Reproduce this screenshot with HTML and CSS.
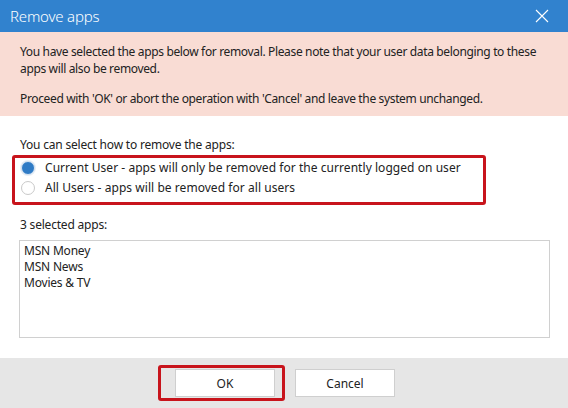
FILE: index.html
```html
<!DOCTYPE html>
<html>
<head>
<meta charset="utf-8">
<link rel="stylesheet" href="styles.css">
</head>
<body>
<div class="dialog">
  <div class="titlebar">
    <span class="title">Remove apps</span>
    <svg class="close" width="14" height="14" viewBox="0 0 14 14"><path d="M1 1 L13 13 M13 1 L1 13" stroke="#fff" stroke-width="1.1" fill="none"/></svg>
  </div>
  <div class="banner">
    <p>You have selected the apps below for removal. Please note that your user data belonging to these apps will also be removed.</p>
    <p>Proceed with 'OK' or abort the operation with 'Cancel' and leave the system unchanged.</p>
  </div>
  <div class="content">
    <div class="label">You can select how to remove the apps:</div>
    <div class="options">
      <label class="option"><span class="radio checked"></span>Current User - apps will only be removed for the currently logged on user</label>
      <label class="option"><span class="radio"></span>All Users - apps will be removed for all users</label>
    </div>
    <div class="label count">3 selected apps:</div>
    <div class="listbox">
      <div>MSN Money</div>
      <div>MSN News</div>
      <div>Movies &amp; TV</div>
    </div>
  </div>
  <div class="footer">
    <div class="okwrap"><button class="btn">OK</button></div>
    <button class="btn">Cancel</button>
  </div>
</div>
</body>
</html>
```
FILE: styles.css
```css
html, body {
  margin: 0;
  padding: 0;
}
body {
  width: 568px;
  height: 408px;
  overflow: hidden;
  font-family: "Noto Sans", "Open Sans", sans-serif;
  font-size: 12px;
  color: #222;
  background: #fff;
}
.dialog {
  display: flex;
  flex-direction: column;
  height: 408px;
}
.titlebar {
  height: 32px;
  background: #3182ce;
  display: flex;
  align-items: center;
  justify-content: space-between;
  padding: 0 19px 0 10px;
  flex-shrink: 0;
}
.title {
  color: #fff;
  font-size: 15px;
  font-weight: 300;
  letter-spacing: -0.2px;
}
.banner {
  background: #f9dcd4;
  height: 84px;
  box-sizing: border-box;
  padding: 11px 20px 0 20px;
  line-height: 17px;
  flex-shrink: 0;
}
.banner p {
  margin: 0 0 13px 0;
  letter-spacing: -0.35px;
}
.content {
  flex: 1;
  padding: 21px 18px 0 19px;
}
.label {
  padding-left: 1px;
  line-height: 16px;
  letter-spacing: -0.2px;
}
.options {
  margin: 2px 0 0 -7px;
  width: 468px;
  height: 44px;
  border: 3px solid #c8141c;
  border-radius: 3px;
  box-sizing: border-box;
  box-sizing: content-box;
  display: flex;
  flex-direction: column;
  justify-content: flex-start;
  padding-top: 0;
  gap: 4px;
}
.option {
  display: flex;
  align-items: center;
  gap: 10px;
  padding-left: 6px;
  line-height: 16px;
  letter-spacing: 0.05px;
}
.option:first-child {
  margin-top: 2px;
}
.radio {
  width: 14px;
  height: 14px;
  border-radius: 50%;
  border: 1px solid #c9c9c9;
  background: #fff;
  box-sizing: border-box;
}
.radio.checked {
  background: #2f7bc5;
  border: 1px solid #d6e4f2;
  box-shadow: 0 0 0 1px #e8eef5;
}
.count {
  margin-top: 12px;
}
.listbox {
  margin-top: 7px;
  height: 98px;
  box-sizing: border-box;
  border: 1px solid #d0d0d0;
  padding: 2px 4px;
  line-height: 16px;
  letter-spacing: -0.2px;
}
.footer {
  height: 50px;
  background: #e6e6e6;
  display: flex;
  justify-content: center;
  align-items: center;
  gap: 10px;
  flex-shrink: 0;
  padding-right: 15px;
}
.okwrap {
  border: 3px solid #c8141c;
  border-radius: 3px;
  padding: 1px 7px 1px 14px;
  background: #e6e6e6;
}
.btn {
  width: 100px;
  height: 28px;
  background: #fff;
  border: 1px solid #cfcfcf;
  font-family: inherit;
  font-size: 12px;
  color: #222;
  padding: 0;
}
```
